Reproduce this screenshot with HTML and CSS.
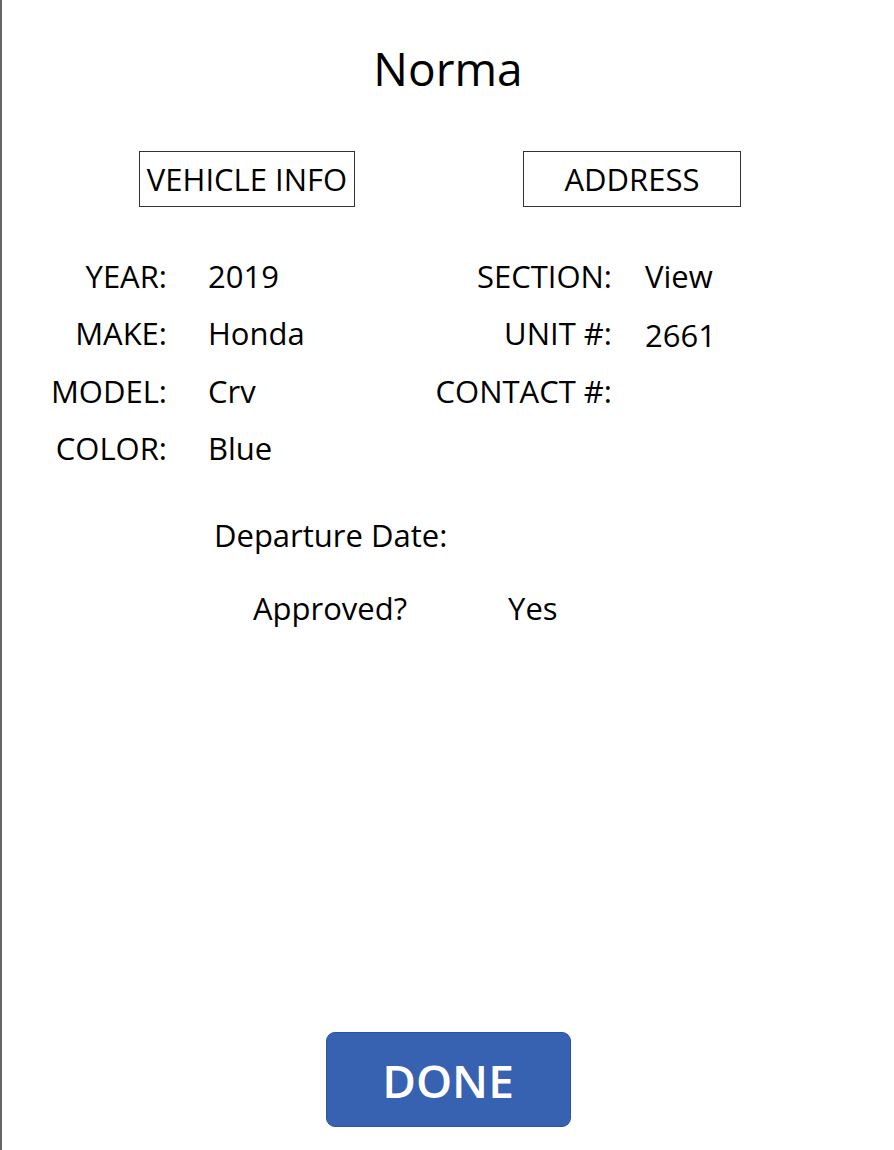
FILE: index.html
```html
<!DOCTYPE html>
<html lang="en">
<head>
<meta charset="utf-8">
<title>Norma</title>
<link rel="stylesheet" href="styles.css">
</head>
<body>
<main class="screen">
  <h1 class="title">Norma</h1>

  <div class="tabs">
    <div class="tab tab-vehicle">VEHICLE INFO</div>
    <div class="tab tab-address">ADDRESS</div>
  </div>

  <section class="fields">
    <div class="grid grid-left">
      <div class="label">YEAR:</div><div class="value">2019</div>
      <div class="label">MAKE:</div><div class="value">Honda</div>
      <div class="label">MODEL:</div><div class="value">Crv</div>
      <div class="label">COLOR:</div><div class="value">Blue</div>
    </div>
    <div class="grid grid-right">
      <div class="label">SECTION:</div><div class="value">View</div>
      <div class="label">UNIT #:</div><div class="value value-low">2661</div>
      <div class="label">CONTACT #:</div><div class="value"></div>
    </div>
  </section>

  <div class="departure">Departure Date:</div>

  <div class="approved">
    <span class="approved-label">Approved?</span>
    <span class="approved-value">Yes</span>
  </div>

  <footer class="footer">
    <button class="done" type="button">DONE</button>
  </footer>
</main>
</body>
</html>
```

FILE: styles.css
```css
html, body {
  margin: 0;
  padding: 0;
  background: #ffffff;
}

body {
  font-family: "Open Sans", "Noto Sans", sans-serif;
  color: #000000;
  border-left: 2px solid #666666;
  min-height: 1150px;
  box-sizing: border-box;
}

.screen {
  display: flex;
  flex-direction: column;
  min-height: 1150px;
}

.title {
  margin: 38px 0 0 0;
  font-size: 46px;
  font-weight: 400;
  line-height: 60px;
  text-align: center;
}

.tabs {
  display: flex;
  margin-top: 53px;
  padding-left: 137px;
  gap: 168px;
}

.tab {
  box-sizing: border-box;
  height: 56px;
  border: 1px solid #333333;
  font-size: 31px;
  line-height: 54px;
  text-align: center;
}

.tab-vehicle {
  width: 216px;
}

.tab-address {
  width: 218px;
}

.fields {
  display: flex;
  margin-top: 41px;
}

.grid {
  display: grid;
  grid-auto-rows: 57.3px;
  font-size: 31px;
  line-height: 57.3px;
}

.grid-left {
  grid-template-columns: 165px 180px;
  column-gap: 41px;
  width: 410px;
}

.grid-right {
  grid-template-columns: 200px 150px;
  column-gap: 33px;
}

.label {
  text-align: right;
  white-space: nowrap;
}

.value {
  white-space: nowrap;
}

.value-low {
  padding-top: 2px;
}

.departure {
  margin-top: 37.5px;
  padding-left: 212px;
  font-size: 31px;
  line-height: 40px;
}

.approved {
  display: flex;
  margin-top: 33px;
  padding-left: 251px;
  font-size: 31px;
  line-height: 40px;
}

.approved-value {
  margin-left: 101px;
}

.footer {
  margin-top: auto;
  display: flex;
  justify-content: center;
  padding-bottom: 23px;
}

.done {
  box-sizing: border-box;
  width: 245px;
  height: 95px;
  background: #3761b1;
  border: 1px solid #2d529c;
  border-radius: 9px;
  color: #ffffff;
  font-family: "Open Sans", "Noto Sans", sans-serif;
  font-size: 46px;
  font-weight: 600;
  padding: 0;
}
```
